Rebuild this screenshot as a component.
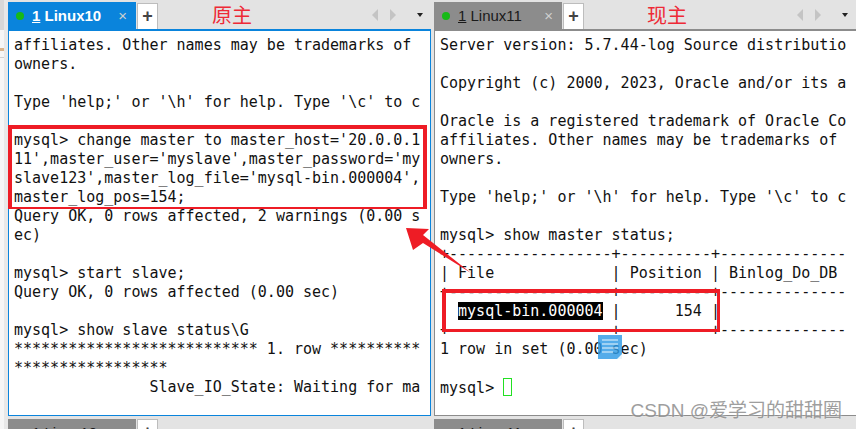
<script>
    const leftLines = [
        "affiliates. Other names may be trademarks of",
        "owners.",
        "",
        "Type 'help;' or '\\h' for help. Type '\\c' to c",
        "",
        "mysql> change master to master_host='20.0.0.1",
        "11',master_user='myslave',master_password='my",
        "slave123',master_log_file='mysql-bin.000004',",
        "master_log_pos=154;",
        "Query OK, 0 rows affected, 2 warnings (0.00 s",
        "ec)",
        "",
        "mysql> start slave;",
        "Query OK, 0 rows affected (0.00 sec)",
        "",
        "mysql> show slave status\\G",
        "*************************** 1. row **********",
        "*****************",
        "               Slave_IO_State: Waiting for ma"
    ]
    const rightLines = [
        "Server version: 5.7.44-log Source distributio",
        "",
        "Copyright (c) 2000, 2023, Oracle and/or its a",
        "",
        "Oracle is a registered trademark of Oracle Co",
        "affiliates. Other names may be trademarks of",
        "owners.",
        "",
        "Type 'help;' or '\\h' for help. Type '\\c' to c",
        "",
        "mysql> show master status;",
        "+------------------+----------+--------------",
        "| File             | Position | Binlog_Do_DB",
        "+------------------+----------+--------------"
    ]
</script>

<div class="screen">
    <div class="rail">
        <div class="rail-top"></div>
        <div class="rail-bit"></div>
        <div class="rail-line"></div>
    </div>
    <section class="pane left">
        <header class="tabbar">
            <div class="tab active">
                <span class="dot"></span>
                <span class="name"><u>1</u> Linux10</span>
                <span class="close">×</span>
            </div>
            <div class="plus">+</div>
            <span class="note">原主</span>
            <div class="nav">
                <span class="tri l"></span>
                <span class="tri r"></span>
                <span class="tri d"></span>
            </div>
        </header>
        <div class="term">
            <pre>{leftLines.join("\n")}</pre>
            <div class="mark mark-left"></div>
        </div>
        <footer class="tabbar next">
            <div class="tab"><span class="dot"></span><span class="name">1 Linux10</span></div>
            <div class="plus">+</div>
        </footer>
    </section>
    <section class="pane right">
        <header class="tabbar">
            <div class="tab">
                <span class="dot"></span>
                <span class="name"><u>1</u> Linux11</span>
                <span class="close">×</span>
            </div>
            <div class="plus">+</div>
            <span class="note">现主</span>
            <div class="nav">
                <span class="tri l"></span>
                <span class="tri r"></span>
                <span class="tri d"></span>
            </div>
        </header>
        <div class="term">
            <pre>{rightLines.join("\n")}
| <span class="sel">mysql-bin.000004</span> |      154 |
+------------------+----------+--------------
1 row in set (0.00 sec)

mysql&gt; <span class="cursor"></span></pre>
            <div class="mark mark-right"></div>
            <div class="doc">
                <svg width="24" height="24" viewBox="0 0 24 24">
                    <rect width="24" height="24" fill="#2f9be6" />
                    <path d="M4 5h16M4 9h16M4 13h16M4 17h11" stroke="#a9d6f5" stroke-width="1.5" />
                    <path d="M24 24h-5l5-5z" fill="#e8f4fc" />
                </svg>
            </div>
            <span class="watermark">CSDN @爱学习的甜甜圈</span>
        </div>
        <footer class="tabbar next">
            <div class="tab"><span class="dot"></span><span class="name">1 Linux11</span></div>
            <div class="plus">+</div>
        </footer>
    </section>
    <svg class="arrow" width="80" height="60" viewBox="0 0 80 60">
        <path d="M6 8 L29 9 L23 15 L71 53 L23 23 L13 30 Z" fill="#ee1c25" />
    </svg>
</div>

<style>
    :global(body) {
        margin: 0;
        background: #e3e3e3;
    }
    .screen {
        position: relative;
        display: flex;
        width: 856px;
        height: 429px;
        overflow: hidden;
        background: #e3e3e3;
    }
    .rail {
        width: 8px;
        flex: none;
        box-sizing: border-box;
        border-right: 4px solid #e8e8e8;
        background: #f6f6f6;
    }
    .rail-top {
        height: 30px;
        background: #d8d8d8;
    }
    .rail-bit {
        height: 3px;
        margin-top: 18px;
        background: #d9b48c;
    }
    .rail-line {
        height: 1px;
        margin-top: 6px;
        background: #d0d0d0;
    }
    .pane {
        display: flex;
        flex-direction: column;
        height: 429px;
    }
    .left {
        width: 423px;
        margin-right: 3px;
    }
    .right {
        flex: 1;
    }
    .tabbar {
        display: flex;
        align-items: flex-end;
        height: 29px;
        flex: none;
        font-family: "Liberation Sans", Arial, sans-serif;
    }
    .tab {
        display: flex;
        align-items: center;
        width: 128px;
        height: 27px;
        box-sizing: border-box;
        padding-left: 8px;
        background: #8c8c8c;
        color: #1a1a1a;
        font-size: 15px;
    }
    .tab.active {
        background: #0a84dc;
        color: #fff;
        font-weight: bold;
    }
    .dot {
        width: 8px;
        height: 8px;
        border-radius: 50%;
        background: #17b917;
        margin-right: 8px;
    }
    .name {
        flex: 1;
    }
    .close {
        margin-right: 9px;
        color: #cfcfcf;
        font-size: 15px;
        font-weight: normal;
    }
    .plus {
        width: 21px;
        height: 26px;
        margin-left: 1px;
        box-sizing: border-box;
        border: 1px solid #bdbdbd;
        border-bottom: none;
        background: #fff;
        color: #444;
        font-size: 18px;
        font-weight: bold;
        line-height: 24px;
        text-align: center;
    }
    .note {
        margin-left: 54px;
        align-self: center;
        color: #ee2a36;
        font-family: "Noto Sans CJK SC", sans-serif;
        font-size: 20px;
        line-height: 29px;
    }
    .right .note {
        margin-left: 63px;
    }
    .nav {
        display: flex;
        align-items: center;
        gap: 12px;
        margin-left: auto;
        margin-right: 8px;
        align-self: center;
    }
    .tri {
        width: 0;
        height: 0;
        border-style: solid;
    }
    .tri.l {
        border-width: 6px 6px 6px 0;
        border-color: transparent #c4c4c4 transparent transparent;
    }
    .tri.r {
        border-width: 6px 0 6px 6px;
        border-color: transparent transparent transparent #c4c4c4;
    }
    .tri.d {
        margin-left: 9px;
        border-width: 4px 3px 0 3px;
        border-color: #222 transparent transparent transparent;
    }
    .term {
        position: relative;
        flex: none;
        height: 387px;
        box-sizing: border-box;
        border: 1px solid #0a84dc;
        border-top-width: 2px;
        padding: 5px 0 0 5px;
        background: #fff;
    }
    .right .term {
        border-color: #8c8c8c;
        border-right: none;
    }
    pre {
        margin: 0;
        color: #111;
        font-family: "DejaVu Sans Mono", monospace;
        font-size: 15px;
        line-height: 19px;
    }
    .sel {
        background: #000;
        color: #fff;
    }
    .cursor {
        display: inline-block;
        width: 7px;
        height: 16px;
        border: 1px solid #22e022;
        vertical-align: -3px;
    }
    .mark {
        position: absolute;
        box-sizing: border-box;
        border: 4px solid #ee1c25;
        border-bottom-width: 3px;
    }
    .mark-left {
        left: -1px;
        top: 94px;
        width: 419px;
        height: 84px;
        border-bottom-width: 2px;
    }
    .mark-right {
        left: 7px;
        top: 258px;
        width: 278px;
        height: 43px;
        border-right-width: 3px;
    }
    .doc {
        position: absolute;
        left: 163px;
        top: 304px;
        line-height: 0;
        opacity: 0.82;
    }
    .watermark {
        position: absolute;
        right: 14px;
        bottom: -7px;
        color: #8e8e8e;
        font-family: "Liberation Sans", "Noto Sans CJK SC", sans-serif;
        font-size: 19px;
        opacity: 0.85;
        text-shadow: 0 0 2px #fff;
    }
    .next {
        height: 13px;
        align-items: flex-start;
        padding-top: 3px;
    }
    .arrow {
        position: absolute;
        left: 400px;
        top: 220px;
    }
</style>
